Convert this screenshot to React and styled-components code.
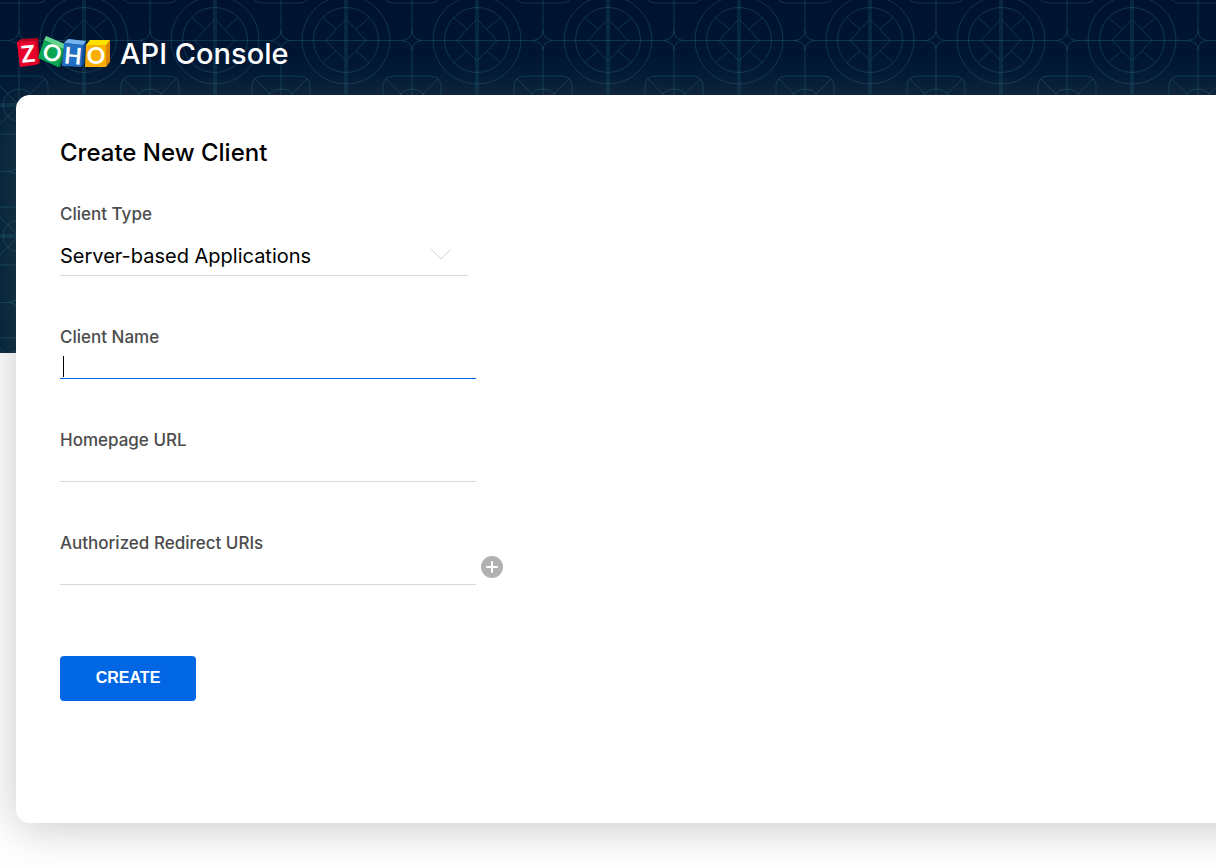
import React from "react";
import styled, { createGlobalStyle, css } from "styled-components";

const GlobalStyle = createGlobalStyle`
  * { box-sizing: border-box; }
  body {
    margin: 0;
    background: #fff;
    color: #000;
    font-family: Inter, "Noto Sans", sans-serif;
  }
`;

const Page = styled.div`
  position: relative;
  min-height: 100vh;
  overflow: hidden;
`;

const Backdrop = styled.svg`
  position: absolute;
  top: 0;
  left: 0;
  width: 100%;
  height: 353px;
  display: block;
`;

const Header = styled.header`
  position: relative;
  display: flex;
  align-items: center;
  gap: 9px;
  height: 95px;
  padding: 12px 16px 0;
`;

const Logo = styled.svg`
  display: block;
  width: 95px;
  height: 36px;
`;

const ProductName = styled.span`
  color: #fff;
  font-size: 29px;
  line-height: 36px;
  font-weight: 500;
`;

const Card = styled.main`
  position: relative;
  margin: 0 -60px 45px 16px;
  padding: 44px 104px 122px 44px;
  border-radius: 14px;
  background: #fff;
  box-shadow: 0 5px 45px rgba(100, 100, 100, 0.35);
`;

const Title = styled.h1`
  margin: 0 0 37px;
  font-size: 24px;
  line-height: 28px;
  font-weight: 500;
`;

const Form = styled.form`
  display: flex;
  flex-direction: column;
  align-items: flex-start;
  gap: 51px;
`;

const Field = styled.div`
  display: flex;
  flex-direction: column;
`;

const Label = styled.label`
  color: #4c4c4c;
  font-size: 17px;
  line-height: 20px;
  font-weight: 500;
`;

const control = css`
  border: 0;
  border-bottom: 1px solid #d8d8d8;
  border-radius: 0;
  outline: none;
  background: transparent;
  color: #000;
  font-family: inherit;
  font-size: 20px;
`;

const SelectWrap = styled.div`
  position: relative;
  width: 408px;
`;

const Select = styled.select`
  ${control}
  appearance: none;
  display: block;
  width: 100%;
  height: 52px;
  padding: 13px 40px 0 0;
`;

const Chevron = styled.svg`
  position: absolute;
  right: 16px;
  top: 24px;
  width: 22px;
  height: 13px;
  pointer-events: none;
`;

const InputWrap = styled.div`
  position: relative;
  display: flex;
  align-items: flex-start;
  gap: 5px;
`;

const Input = styled.input`
  ${control}
  width: 416px;
  height: 32px;
  padding: 6px 3px 0;
  border-color: ${(p) => (p.$active ? "#0066e0" : "#d8d8d8")};
  caret-color: transparent;
`;

const Caret = styled.span`
  position: absolute;
  left: 3px;
  bottom: 2px;
  width: 1px;
  height: 21px;
  background: #000;
`;

const AddButton = styled.button`
  display: flex;
  align-items: center;
  width: 22px;
  height: 28px;
  padding: 0;
  border: 0;
  background: none;
  cursor: pointer;
`;

const CreateButton = styled.button`
  width: 136px;
  height: 45px;
  margin-top: 20px;
  padding: 0 0 2px;
  border: 0;
  border-radius: 4px;
  background: #0066e4;
  color: #fff;
  font: bold 16px/20px "Liberation Sans", sans-serif;
  cursor: pointer;
`;

function PatternBackdrop() {
  return (
    <Backdrop aria-hidden="true">
      <defs>
        <linearGradient id="night" x1="0" y1="0" x2="0" y2="1">
          <stop offset="0" stopColor="#00122f" />
          <stop offset="0.15" stopColor="#001633" />
          <stop offset="0.4" stopColor="#00223a" />
          <stop offset="1" stopColor="#002239" />
        </linearGradient>
        <pattern id="tiles" x="-47" y="-26" width="131" height="131" patternUnits="userSpaceOnUse">
          <g fill="none" stroke="#2f8290" strokeOpacity="0.3" strokeWidth="1">
            <circle cx="0" cy="66" r="44" />
            <circle cx="131" cy="66" r="44" />
            <circle cx="0" cy="66" r="32.5" />
            <circle cx="131" cy="66" r="32.5" />
            <path strokeWidth="4" strokeOpacity="0.18" d="M0 0V131M131 0V131M0 0H131M0 131H131" />
            <path d="M0 66.5H56Q66 65 66 56V0M131 66.5H75Q66 65 66 56M56 66.5Q66 68 66 76V131M75 66.5Q66 68 66 76" />
            <path d="M1 46L20 66.5L1 86M130 46L111 66.5L130 86M10 55L23 44M10 77L23 88M121 55L108 44M121 77L108 88" />
            <path d="M37 0V18Q37 29 48 29H84Q95 29 95 18V0M37 131V113Q37 102 48 102H84Q95 102 95 113V131" />
            <circle cx="66" cy="0" r="16" />
            <circle cx="66" cy="131" r="16" />
            <path d="M40 26L54 12L66 0L78 12L92 26M40 105L54 119L66 131L78 119L92 105" />
          </g>
        </pattern>
      </defs>
      <rect width="100%" height="100%" fill="url(#night)" />
      <rect width="100%" height="100%" fill="url(#tiles)" />
    </Backdrop>
  );
}

function ZohoLogo() {
  return (
    <Logo viewBox="0 0 95 36" role="img" aria-label="Zoho">
      <path d="M1 6L5 3L22 2L24 27L20 29L4 31Z" fill="#b8001f" />
      <path d="M1 6L20 5L22 28L4 31Z" fill="#e8042c" />
      <path d="M30 0L51 9L44 31L41 31Z" fill="#078b45" />
      <path d="M30 0L51 9L47 13L28 4Z" fill="#62d38f" />
      <path d="M28 4L47 13L42 31L22 22Z" fill="#0da653" />
      <path d="M52 3L70 5L68 28L65 31Z" fill="#0e4f9e" />
      <path d="M52 3L70 5L67 9L48 7Z" fill="#74b4ee" />
      <path d="M48 7L67 9L65 31L46 30Z" fill="#2170c4" />
      <path d="M74 4H94V26L90 31H71Z" fill="#dc8500" />
      <path d="M74 4H94L90 9H70Z" fill="#ffe100" />
      <path d="M70 9H90V31H69Z" fill="#fbb000" />
      <g fill="#fff" fontFamily="Lato, sans-serif" fontWeight="700" fontSize="23" textAnchor="middle">
        <text x="12" y="26" transform="rotate(-6 12 18)">Z</text>
        <text x="36" y="25" transform="rotate(22 36 17)">O</text>
        <text x="57" y="28" transform="rotate(5 57 20)">H</text>
        <text x="80" y="28">O</text>
      </g>
    </Logo>
  );
}

export default function App() {
  return (
    <Page>
      <GlobalStyle />
      <PatternBackdrop />
      <Header>
        <ZohoLogo />
        <ProductName>API Console</ProductName>
      </Header>
      <Card>
        <Title>Create New Client</Title>
        <Form onSubmit={(e) => e.preventDefault()}>
          <Field>
            <Label htmlFor="type">Client Type</Label>
            <SelectWrap>
              <Select id="type">
                <option>Server-based Applications</option>
              </Select>
              <Chevron viewBox="0 0 22 13" aria-hidden="true">
                <path d="M1 1L11 11L21 1" fill="none" stroke="#d4d4d4" />
              </Chevron>
            </SelectWrap>
          </Field>
          <Field>
            <Label htmlFor="name">Client Name</Label>
            <InputWrap>
              <Input id="name" type="text" $active />
              <Caret />
            </InputWrap>
          </Field>
          <Field>
            <Label htmlFor="homepage">Homepage URL</Label>
            <InputWrap>
              <Input id="homepage" type="text" />
            </InputWrap>
          </Field>
          <Field>
            <Label htmlFor="redirect">Authorized Redirect URIs</Label>
            <InputWrap>
              <Input id="redirect" type="text" />
              <AddButton type="button" aria-label="Add redirect URI">
                <svg width="22" height="22" viewBox="0 0 22 22" aria-hidden="true">
                  <circle cx="11" cy="11" r="11" fill="#b3b1b0" />
                  <path d="M11 6V16M6 11H16" stroke="#fff" strokeWidth="2" strokeLinecap="round" />
                </svg>
              </AddButton>
            </InputWrap>
          </Field>
          <CreateButton type="submit">CREATE</CreateButton>
        </Form>
      </Card>
    </Page>
  );
}
